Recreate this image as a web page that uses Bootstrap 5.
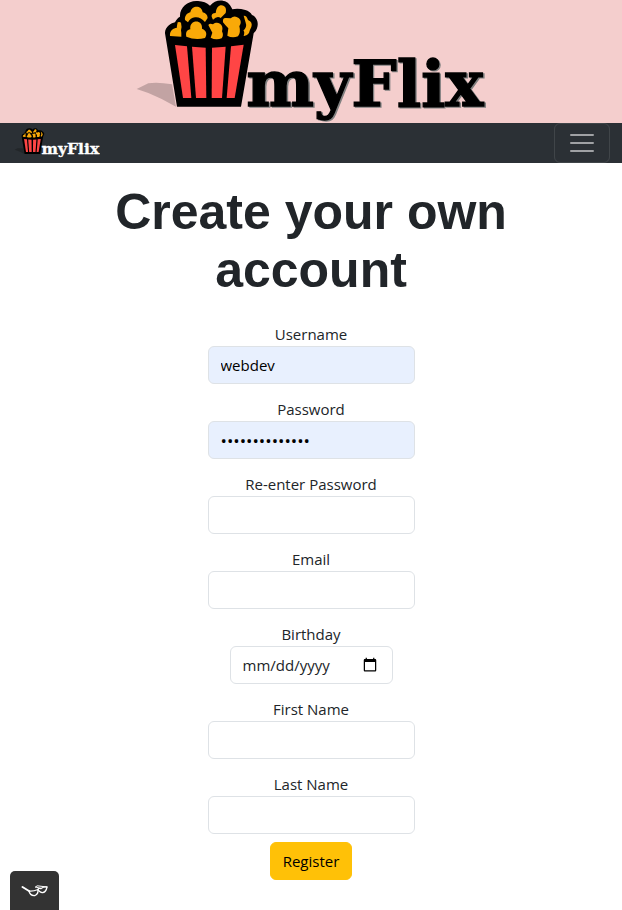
<!DOCTYPE html>
<html lang="en">
<head>
<meta charset="utf-8">
<meta name="viewport" content="width=device-width, initial-scale=1">
<title>myFlix - Create your own account</title>
<link href="https://cdn.jsdelivr.net/npm/bootstrap@5.3.0/dist/css/bootstrap.min.css" rel="stylesheet">
<style>
  body { font-family: "Segoe UI", "Open Sans", "Noto Sans", sans-serif; font-size: 15px; line-height: 24px; }
  .banner { background: #f4cecd; }
  .banner svg { width: 360px; height: 123px; }
  .site-nav { background: #2b3035; }
  .site-nav svg.brand-logo { width: 88px; height: 30px; }
  .logo-word { font-family: "DejaVu Serif", serif; font-weight: 700; font-size: 192px; stroke-width: 4px; }
  .banner .logo-word { fill: #000; stroke: #000; }
  .banner .word-shade { fill: #808080; stroke: #808080; }
  .site-nav .logo-word { fill: #fff; stroke: #fff; }
  .page-title { font-family: Arial, "Liberation Sans", sans-serif; font-size: 50px; line-height: 58px; font-weight: 700; max-width: 480px; }
  .signup { gap: 13px; padding-top: 23px; }
  .signup .form-control { font-size: 15px; line-height: 24px; height: 38px; width: 207px; border-color: #dee2e6; }
  .signup input[type="date"] { width: 163px; }
  .signup input[type="date"]::-webkit-calendar-picker-indicator { font-size: 16px; }
  .signup input[type="password"] { font-size: 17px; }
  .signup .prefilled { background: #e8f0fe; color: #000; }
  .signup .btn { font-size: 15px; line-height: 24px; }
  .reader-btn { background: #333; border-radius: 5px 5px 0 0; width: 49px; height: 39px; left: 10px; }
</style>
</head>
<body>
<svg class="d-none" aria-hidden="true">
  <symbol id="popcorn" viewBox="0 0 1080 369">
    <path d="M105 100C104 82 124 69 135 67Q142 53 150 50C148 22 175 0 204 3Q226 4 240 17C257-4 290-4 303 20L307 28Q324 24 346 30Q360 34 366 45C387 54 389 82 371 100L333 320H141Z" fill="#000"/>
    <g fill="#f9a908">
      <path d="M120 108C118 92 131 84 140 84Q141 77 143 67Q149 64 153 68Q156 79 153 91Q155 101 154 110Z"/>
      <path d="M165 60C163 45 175 38 181 37C185 15 215 15 218 37Q232 40 233 54L225 66Q211 50 195 52Q181 53 174 67Z"/>
      <path d="M245 50Q243 40 257 39Q259 20 271 16C285 14 291 26 287 39L272 54Q262 46 249 59Z"/>
      <path d="M169 110C166 96 172 89 181 88C177 58 219 57 216 86C230 91 232 103 225 114Q196 122 169 110Z"/>
      <path d="M235 75Q239 69 249 73C264 61 283 75 276 94Q282 106 275 115Q257 121 242 113L247 98Z"/>
      <path d="M279 67Q277 52 289 54L302 55Q313 44 326 54C335 62 333 72 328 78Q333 99 324 109Q306 115 292 107L295 85Q286 76 279 67Z"/>
      <path d="M341 47Q350 46 354 60Q369 66 364 81Q360 88 357 99Q350 109 341 108Q345 94 340 92Q352 80 347 68Z"/>
    </g>
    <g fill="#ff4545">
      <path d="M135 135L171 139L184 294H159Z"/>
      <path d="M186 140L227 143L229 294H198Z"/>
      <path d="M246 143L287 140L276 294H245Z"/>
      <path d="M303 139L341 134L314 294H290Z"/>
    </g>
  </symbol>
</svg>

<header class="banner d-flex justify-content-center">
  <svg viewBox="3 0 1080 369" role="img" aria-label="myFlix">
    <path d="M20 267L55 250Q82 245 126 253L138 320Q99 297 55 279Z" fill="#c2a3a3"/>
    <use href="#popcorn" width="1080" height="369"/>
    <text class="logo-word word-shade" x="353" y="321">myFlix</text>
    <text class="logo-word" x="349" y="317">myFlix</text>
  </svg>
</header>

<nav class="navbar navbar-dark site-nav py-0">
  <div class="container-fluid">
    <a class="navbar-brand d-flex p-0 m-0" href="#" aria-label="myFlix home">
      <svg class="brand-logo" viewBox="-12 0 1080 369">
        <path d="M20 267L55 250Q82 245 126 253L138 320Q99 297 55 279Z" fill="#222629"/>
        <use href="#popcorn" width="1080" height="369"/>
        <text class="logo-word" x="349" y="317">myFlix</text>
      </svg>
    </a>
    <button class="navbar-toggler" type="button" data-bs-toggle="collapse" data-bs-target="#menu" aria-controls="menu" aria-expanded="false" aria-label="Toggle navigation">
      <span class="navbar-toggler-icon"></span>
    </button>
    <div class="collapse navbar-collapse" id="menu"></div>
  </div>
</nav>

<main class="container text-center">
  <h1 class="page-title mx-auto mb-0 mt-3 pt-1">Create your own account</h1>
  <form class="signup d-flex flex-column align-items-center">
    <div><label class="d-block" for="username">Username</label><input class="form-control prefilled" type="text" id="username" value="webdev"></div>
    <div><label class="d-block" for="password">Password</label><input class="form-control prefilled" type="password" id="password" value="secretsecrets1"></div>
    <div><label class="d-block" for="password2">Re-enter Password</label><input class="form-control" type="password" id="password2"></div>
    <div><label class="d-block" for="email">Email</label><input class="form-control" type="email" id="email"></div>
    <div><label class="d-block" for="birthday">Birthday</label><input class="form-control" type="date" id="birthday"></div>
    <div><label class="d-block" for="first">First Name</label><input class="form-control" type="text" id="first"></div>
    <div>
      <label class="d-block" for="last">Last Name</label><input class="form-control mb-2" type="text" id="last">
      <button class="btn btn-warning" type="submit">Register</button>
    </div>
  </form>
</main>

<button class="reader-btn position-fixed bottom-0 border-0 p-0 d-flex" type="button" aria-label="Reading view">
  <svg width="49" height="39" viewBox="0 0 49 39" fill="none" stroke="#fff" stroke-linecap="round" stroke-linejoin="round">
    <path d="M12.500 16L19 20" stroke-width="2"/>
    <path d="M19 20Q23 20.500 28 18.500Q28.500 23 25 24.500Q20 25 19 20Z" stroke-width="1.300"/>
    <path d="M28 18.500Q28 17 31 17.500Q34 15.500 37 16Q36 21 33 21.500Q30 22 28 18.500" stroke-width="1.300"/>
    <path d="M25.500 16Q27 14 29 15L37 16M25.500 16L31 17.500" stroke-width="1"/>
  </svg>
</button>
<script src="https://cdn.jsdelivr.net/npm/bootstrap@5.3.0/dist/js/bootstrap.bundle.min.js"></script>
</body>
</html>
